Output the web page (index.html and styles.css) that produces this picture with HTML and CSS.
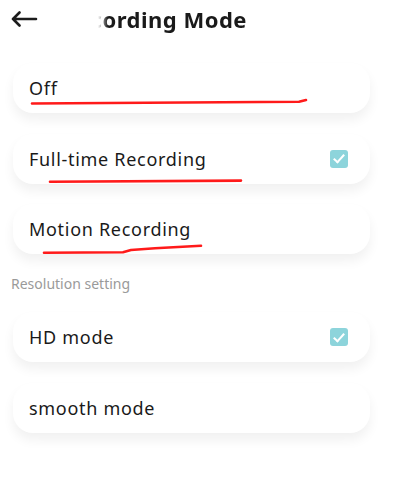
FILE: index.html
```html
<!DOCTYPE html>
<html lang="en">
<head>
  <meta charset="UTF-8" />
  <meta name="viewport" content="width=device-width, initial-scale=1.0" />
  <title>Recording Mode</title>
  <link rel="stylesheet" href="styles.css">
</head>
<body>
  <header class="topbar">
    <svg class="back" width="28" height="16" viewBox="0 0 28 16">
      <path d="M26 8H3M9.5 1.5L3 8l6.5 6.5" fill="none" stroke="#1c1c1c" stroke-width="2.6" stroke-linecap="round" stroke-linejoin="round"/>
    </svg>
    <div class="title-clip">
      <h1 class="title">Recording Mode</h1>
    </div>
  </header>

  <main class="list">
    <div class="card"><span>Off</span></div>
    <div class="card"><span>Full-time Recording</span><i class="check"></i></div>
    <div class="card"><span>Motion Recording</span></div>

    <p class="section">Resolution setting</p>

    <div class="card"><span>HD mode</span><i class="check"></i></div>
    <div class="card"><span>smooth mode</span></div>
  </main>

  <!-- hand-drawn red marks on top of the screenshot -->
  <svg class="marks" width="405" height="480" viewBox="0 0 405 480">
    <g fill="none" stroke="#ff1a1a" stroke-width="2.6" stroke-linecap="round" stroke-linejoin="round">
      <path d="M32 103.5L299 101.8L306 100"/>
      <path d="M50 181.8L241 180.6"/>
      <path d="M44 252.8L123 252.2L131 250L155 248.2L201 245.8"/>
    </g>
  </svg>
</body>
</html>
```

FILE: styles.css
```css
* {
  box-sizing: border-box;
  margin: 0;
  padding: 0;
}

body {
  font-family: 'Noto Sans', 'Open Sans', sans-serif;
  background: #ffffff;
  color: #1a1a1a;
  width: 405px;
  height: 480px;
  overflow: hidden;
  position: relative;
}

.topbar {
  display: flex;
  align-items: center;
  height: 38px;
  padding-left: 10px;
}

.back {
  flex: none;
}

.title-clip {
  margin-left: 60px;
  width: 200px;
  overflow: hidden;
  -webkit-mask-image: linear-gradient(to right, transparent 0, #000 10px);
  mask-image: linear-gradient(to right, transparent 0, #000 10px);
}

.title {
  font-size: 22px;
  font-weight: 700;
  line-height: 30px;
  white-space: nowrap;
  margin-left: -36px;
  letter-spacing: 0.5px;
}

.list {
  display: flex;
  flex-direction: column;
  gap: 20.5px;
  padding: 25px 35px 0 13px;
}

.card {
  height: 50px;
  background: #fff;
  border-radius: 20px;
  box-shadow: 0 7px 12px rgba(0, 0, 0, 0.06);
  display: flex;
  align-items: center;
  justify-content: space-between;
  padding: 0 22px 0 16px;
  font-size: 18px;
  letter-spacing: 0.7px;
}

.check {
  width: 18px;
  height: 18px;
  border-radius: 3px;
  background: #8dd4db;
  position: relative;
}

.check::after {
  content: '';
  position: absolute;
  left: 6px;
  top: 2.5px;
  width: 4px;
  height: 9px;
  border: solid #fff;
  border-width: 0 2.2px 2.2px 0;
  transform: rotate(42deg);
}

.section {
  font-size: 14px;
  color: #9a9a9a;
  margin-left: -2px;
  height: 17px;
  line-height: 17px;
}

.marks {
  position: absolute;
  left: 0;
  top: 0;
  pointer-events: none;
}
```
